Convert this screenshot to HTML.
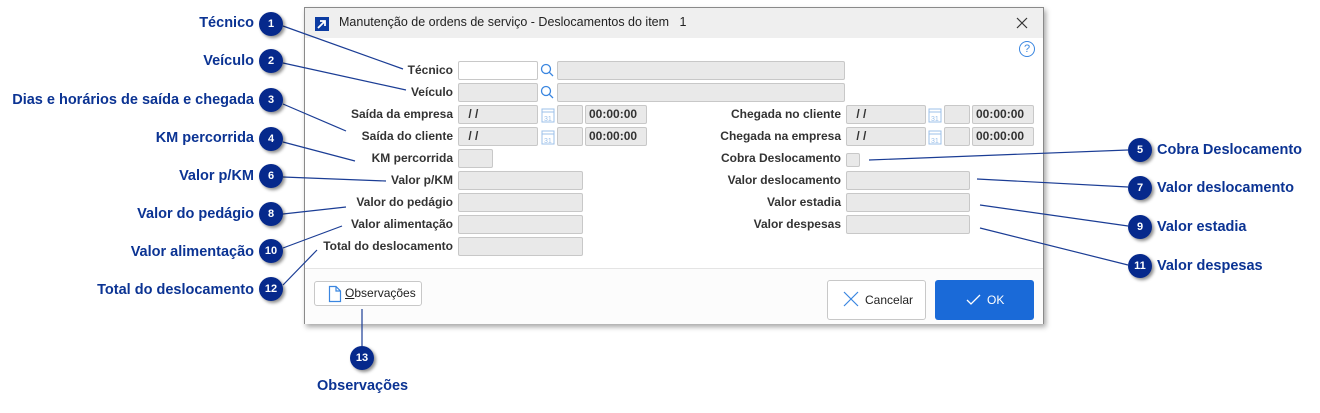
<!DOCTYPE html>
<html><head><meta charset="utf-8"><style>
*{box-sizing:border-box;margin:0;padding:0}
body{width:1320px;height:413px;background:#fff;position:relative;overflow:hidden;font-family:"Liberation Sans",sans-serif}
.a{position:absolute}
.cl{position:absolute;font-weight:bold;font-size:14.5px;color:#0b3393;white-space:nowrap;line-height:18px}
.b{position:absolute;width:24px;height:24px;border-radius:50%;background:#06298c;color:#fff;font-weight:bold;font-size:11px;text-align:center;line-height:24px;box-shadow:2px 2px 3px rgba(0,0,0,.45);z-index:3}
.lb{position:absolute;font-weight:bold;font-size:12px;color:#333;text-align:right;white-space:nowrap;line-height:19px}
.f{position:absolute;height:19px;background:#e9e9e9;border:1px solid #c8c8c8;border-radius:2px;font-size:12px;font-weight:bold;color:#333;line-height:17px;padding-left:6px}
.w{background:#fff}
</style></head><body>

<div class="cl" style="right:1066px;top:14px">Técnico</div>
<div class="cl" style="right:1066px;top:52px">Veículo</div>
<div class="cl" style="right:1066px;top:91px">Dias e horários de saída e chegada</div>
<div class="cl" style="right:1066px;top:129px">KM percorrida</div>
<div class="cl" style="right:1066px;top:167px">Valor p/KM</div>
<div class="cl" style="right:1066px;top:205px">Valor do pedágio</div>
<div class="cl" style="right:1066px;top:243px">Valor alimentação</div>
<div class="cl" style="right:1066px;top:281px">Total do deslocamento</div>
<div class="b" style="left:259px;top:12px">1</div>
<div class="b" style="left:259px;top:49px">2</div>
<div class="b" style="left:259px;top:88px">3</div>
<div class="b" style="left:259px;top:127px">4</div>
<div class="b" style="left:259px;top:164px">6</div>
<div class="b" style="left:259px;top:202px">8</div>
<div class="b" style="left:259px;top:239px">10</div>
<div class="b" style="left:259px;top:277px">12</div>
<div class="b" style="left:1128px;top:138px">5</div>
<div class="b" style="left:1128px;top:176px">7</div>
<div class="b" style="left:1128px;top:215px">9</div>
<div class="b" style="left:1128px;top:254px">11</div>
<div class="cl" style="left:1157px;top:141px">Cobra Deslocamento</div>
<div class="cl" style="left:1157px;top:179px">Valor deslocamento</div>
<div class="cl" style="left:1157px;top:218px">Valor estadia</div>
<div class="cl" style="left:1157px;top:257px">Valor despesas</div>
<div class="b" style="left:350px;top:346px">13</div>
<div class="cl" style="left:317px;top:377px">Observações</div>

<div class="a" style="left:304px;top:7px;width:740px;height:317px;border:1px solid #8a8a8a;background:#fff;box-shadow:2px 3px 5px rgba(0,0,0,.35)">
 <div class="a" style="left:0;top:0;width:738px;height:30px;background:#efefef"></div>
 <div class="a" style="left:10px;top:9px;width:14px;height:14px;background:#0c3ca2"><svg width="14" height="14"><path d="M3 11 L10 4 M5 4 H10 V9" stroke="#fff" stroke-width="1.8" fill="none"/></svg></div>
 <div class="a" style="left:34px;top:7px;font-size:12.5px;color:#222">Manutenção de ordens de serviço - Deslocamentos do item &nbsp; 1</div>
 <svg class="a" style="left:711px;top:9px" width="12" height="12"><path d="M1 1 L11 11 M11 1 L1 11" stroke="#333" stroke-width="1.2"/></svg>
 <div class="a" style="left:714px;top:33px;width:16px;height:16px;border:1.3px solid #3a86e0;border-radius:50%;color:#3a86e0;font-size:11px;text-align:center;line-height:14px">?</div>
 <div class="a" style="left:0;top:260px;width:738px;height:1px;background:#e4e4e4"></div>
 <div class="a" style="left:0;top:261px;width:738px;height:55px;background:#fcfcfc"></div>
</div>

<div class="lb" style="right:867px;top:61px">Técnico</div>
<div class="lb" style="right:867px;top:83px">Veículo</div>
<div class="lb" style="right:867px;top:105px">Saída da empresa</div>
<div class="lb" style="right:867px;top:127px">Saída do cliente</div>
<div class="lb" style="right:867px;top:149px">KM percorrida</div>
<div class="lb" style="right:867px;top:171px">Valor p/KM</div>
<div class="lb" style="right:867px;top:193px">Valor do pedágio</div>
<div class="lb" style="right:867px;top:215px">Valor alimentação</div>
<div class="lb" style="right:867px;top:237px">Total do deslocamento</div>
<div class="lb" style="right:479px;top:105px">Chegada no cliente</div>
<div class="lb" style="right:479px;top:127px">Chegada na empresa</div>
<div class="lb" style="right:479px;top:149px">Cobra Deslocamento</div>
<div class="lb" style="right:479px;top:171px">Valor deslocamento</div>
<div class="lb" style="right:479px;top:193px">Valor estadia</div>
<div class="lb" style="right:479px;top:215px">Valor despesas</div>

<div class="f w" style="left:458px;top:61px;width:80px"></div>
<div class="f" style="left:557px;top:61px;width:288px"></div>
<div class="f" style="left:458px;top:83px;width:80px"></div>
<div class="f" style="left:557px;top:83px;width:288px"></div>
<svg class="a" style="left:540px;top:63px" width="14" height="36"><g stroke="#3a86e0" stroke-width="1.3" fill="none"><circle cx="6" cy="6" r="4.5"/><line x1="9.2" y1="9.2" x2="13" y2="13"/><circle cx="6" cy="28" r="4.5"/><line x1="9.2" y1="31.2" x2="13" y2="35"/></g></svg>

<div class="f" style="left:458px;top:105px;width:80px">&nbsp;/ /</div>
<div class="f" style="left:557px;top:105px;width:26px"></div>
<div class="f" style="left:585px;top:105px;width:62px;padding-left:3px">00:00:00</div>
<div class="f" style="left:458px;top:127px;width:80px">&nbsp;/ /</div>
<div class="f" style="left:557px;top:127px;width:26px"></div>
<div class="f" style="left:585px;top:127px;width:62px;padding-left:3px">00:00:00</div>
<div class="f" style="left:846px;top:105px;width:80px">&nbsp;/ /</div>
<div class="f" style="left:944px;top:105px;width:26px"></div>
<div class="f" style="left:972px;top:105px;width:62px;padding-left:3px">00:00:00</div>
<div class="f" style="left:846px;top:127px;width:80px">&nbsp;/ /</div>
<div class="f" style="left:944px;top:127px;width:26px"></div>
<div class="f" style="left:972px;top:127px;width:62px;padding-left:3px">00:00:00</div>
<svg class="a" style="left:541px;top:106px" width="14" height="40"><g stroke="#9cc0ea" stroke-width="1" fill="none"><rect x="1" y="3" width="12" height="13"/><line x1="1" y1="6" x2="13" y2="6"/><rect x="1" y="25" width="12" height="13"/><line x1="1" y1="28" x2="13" y2="28"/></g><text x="3" y="15" font-size="7" fill="#9cc0ea" font-family="Liberation Sans">31</text><text x="3" y="37" font-size="7" fill="#9cc0ea" font-family="Liberation Sans">31</text></svg>
<svg class="a" style="left:928px;top:106px" width="14" height="40"><g stroke="#9cc0ea" stroke-width="1" fill="none"><rect x="1" y="3" width="12" height="13"/><line x1="1" y1="6" x2="13" y2="6"/><rect x="1" y="25" width="12" height="13"/><line x1="1" y1="28" x2="13" y2="28"/></g><text x="3" y="15" font-size="7" fill="#9cc0ea" font-family="Liberation Sans">31</text><text x="3" y="37" font-size="7" fill="#9cc0ea" font-family="Liberation Sans">31</text></svg>

<div class="f" style="left:458px;top:149px;width:35px"></div>
<div class="f" style="left:458px;top:171px;width:125px"></div>
<div class="f" style="left:458px;top:193px;width:125px"></div>
<div class="f" style="left:458px;top:215px;width:125px"></div>
<div class="f" style="left:458px;top:237px;width:125px"></div>
<div class="f" style="left:846px;top:153px;width:14px;height:14px"></div>
<div class="f" style="left:846px;top:171px;width:124px"></div>
<div class="f" style="left:846px;top:193px;width:124px"></div>
<div class="f" style="left:846px;top:215px;width:124px"></div>

<div class="a" style="left:314px;top:281px;width:108px;height:25px;border:1px solid #c8c8c8;border-radius:3px;background:#fff;font-size:12px;color:#222;line-height:23px;padding-left:30px"><span style="text-decoration:underline">O</span>bservações</div>
<svg class="a" style="left:328px;top:285px" width="14" height="18"><path d="M1.5 1.5 H8 L12.5 6 V16.5 H1.5 Z M8 1.5 V6 H12.5" stroke="#3a86e0" stroke-width="1.2" fill="none"/></svg>
<div class="a" style="left:827px;top:280px;width:99px;height:40px;border:1px solid #c8c8c8;border-radius:3px;background:#fff;font-size:12px;color:#222;line-height:38px;padding-left:37px">Cancelar</div>
<svg class="a" style="left:843px;top:291px" width="16" height="16"><path d="M1 1 L15 15 M15 1 L1 15" stroke="#3a86e0" stroke-width="1.2"/></svg>
<div class="a" style="left:935px;top:280px;width:99px;height:40px;border-radius:3px;background:#1a6ad8;font-size:12px;color:#fff;line-height:40px;padding-left:52px">OK</div>
<svg class="a" style="left:966px;top:294px" width="15" height="12"><path d="M1 6 L5 10 L14 1" stroke="#fff" stroke-width="1.3" fill="none"/></svg>

<svg class="a" style="left:0;top:0;z-index:2" width="1320" height="413">
<g stroke="#1b3d95" stroke-width="1.2" fill="none">
<line x1="283" y1="26" x2="403" y2="69"/>
<line x1="283" y1="63" x2="406" y2="90"/>
<line x1="283" y1="104" x2="346" y2="131"/>
<line x1="283" y1="142" x2="355" y2="161"/>
<line x1="283" y1="177" x2="386" y2="181"/>
<line x1="283" y1="214" x2="346" y2="207"/>
<line x1="283" y1="248" x2="342" y2="226"/>
<line x1="283" y1="285" x2="317" y2="250"/>
<line x1="869" y1="160" x2="1128" y2="150"/>
<line x1="977" y1="179" x2="1128" y2="187"/>
<line x1="980" y1="205" x2="1128" y2="226"/>
<line x1="980" y1="228" x2="1128" y2="265"/>
<line x1="362" y1="309" x2="362" y2="346"/>
</g></svg>
</body></html>
